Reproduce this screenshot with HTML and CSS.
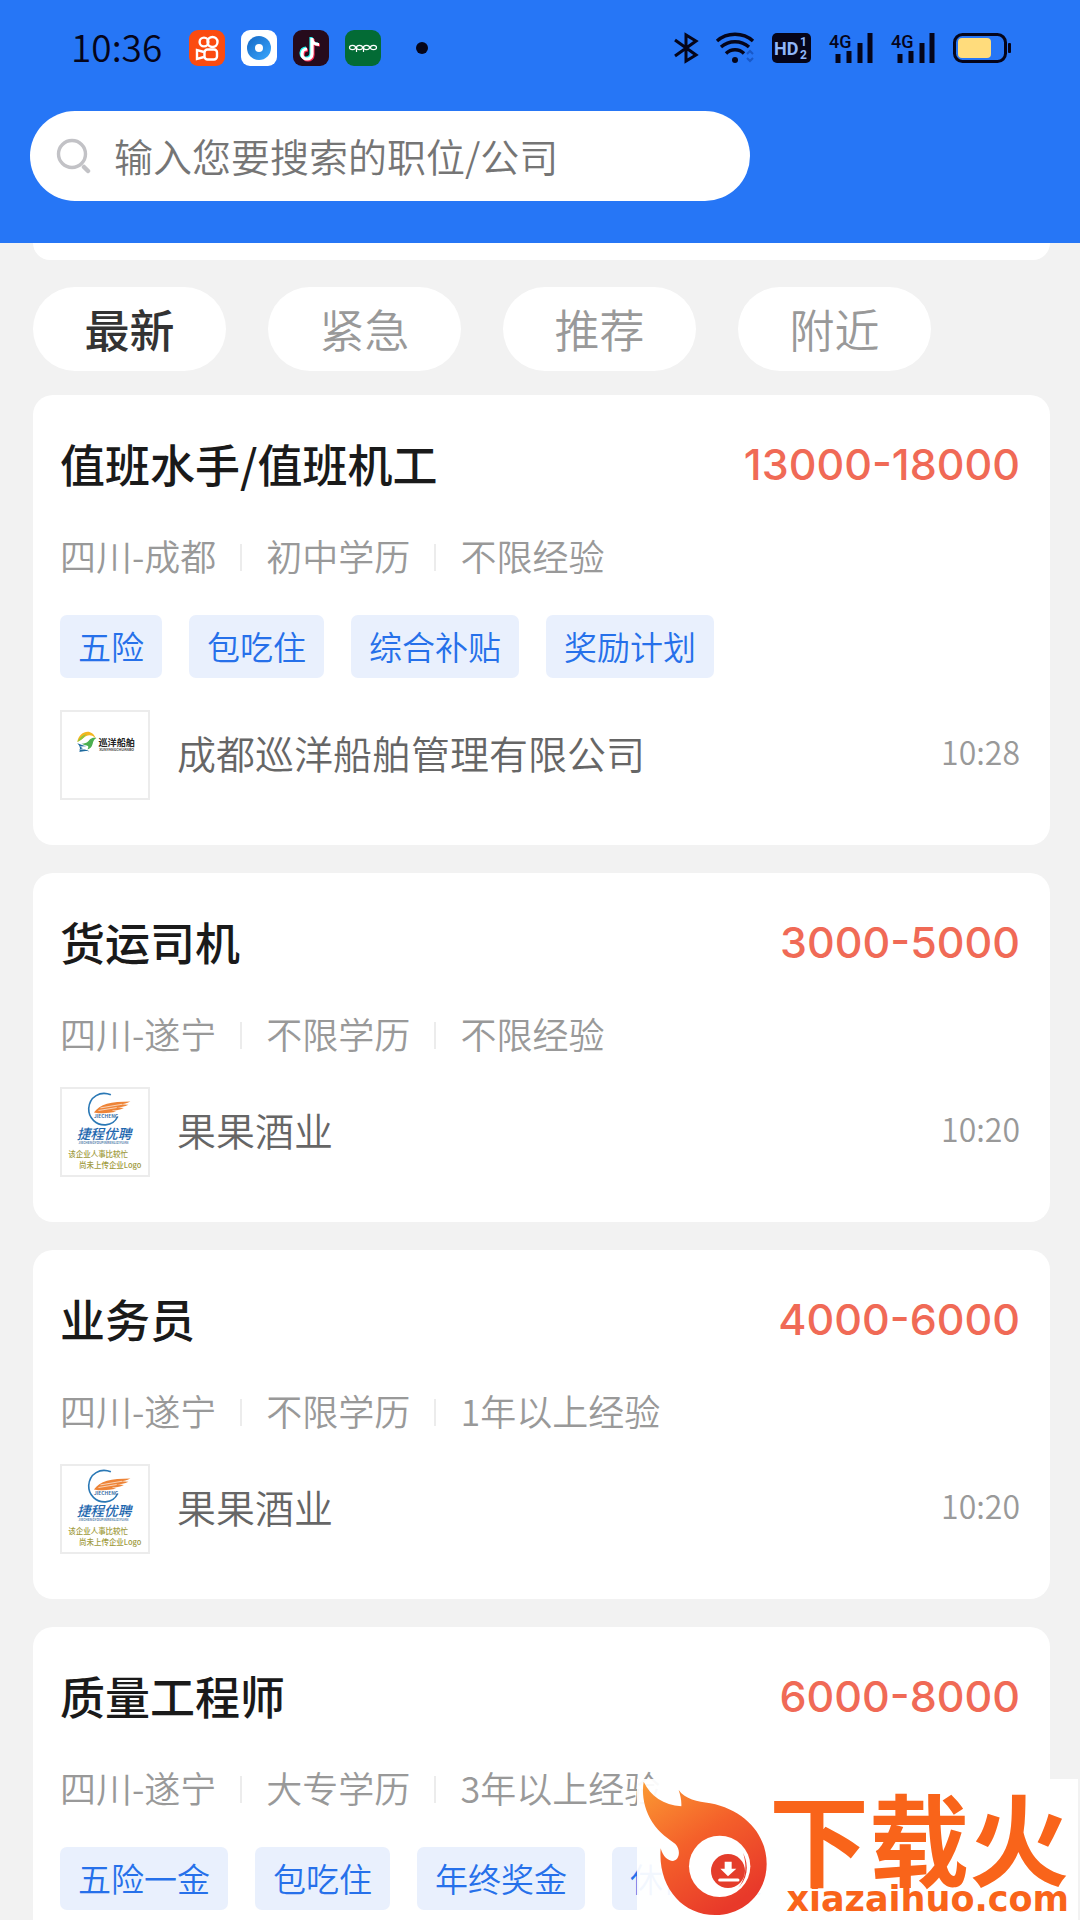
FILE: index.html
```html
<!DOCTYPE html>
<html lang="zh-CN">
<head>
    <meta charset="UTF-8">
    <meta name="viewport" content="width=device-width, initial-scale=1.0">
    <title>职位列表</title>
    <link rel="stylesheet" href="styles.css">
</head>
<body>
    <header class="top">
        <div class="status">
            <span class="clock">10:36</span>
            <div class="apps">
                <svg width="36" height="36" viewBox="0 0 36 36">
                    <rect width="36" height="36" rx="9" fill="#fb4b10"/>
                    <g fill="none" stroke="#fff" stroke-width="2.4">
                        <circle cx="15" cy="12" r="4.4"/>
                        <circle cx="23.5" cy="12" r="5"/>
                        <rect x="15.500" y="19.500" width="12.500" height="10" rx="3"/>
                        <path d="M15 22L8 20V29L15 27"/>
                    </g>
                </svg>
                <svg width="36" height="36" viewBox="0 0 36 36">
                    <defs>
                        <linearGradient id="blueRing" x1="0" y1="0" x2="1" y2="1">
                            <stop offset="0" stop-color="#1467c4"/>
                            <stop offset="1" stop-color="#3aa9ff"/>
                        </linearGradient>
                    </defs>
                    <rect width="36" height="36" rx="9" fill="#fff"/>
                    <circle cx="18" cy="18" r="12" fill="url(#blueRing)"/>
                    <circle cx="18" cy="18" r="4" fill="#fff"/>
                </svg>
                <svg width="36" height="36" viewBox="0 0 36 36">
                    <rect width="36" height="36" rx="9" fill="#260b1c"/>
                    <g fill="none" stroke-width="3.2">
                        <path d="M18 7V23A5 5 0 1 1 13 18M18 8C18 12 21 14 25 14" stroke="#25f4ee"/>
                        <path d="M20 9V25A5 5 0 1 1 15 20M20 10C20 13 23 15 27 15" stroke="#fe2c55"/>
                        <path d="M19 8V24A5 5 0 1 1 14 19M19 9C19 12.500 22 14.500 26 14.500" stroke="#fff"/>
                    </g>
                </svg>
                <svg width="36" height="36" viewBox="0 0 36 36">
                    <rect width="36" height="36" rx="9" fill="#036b35"/>
                    <g fill="none" stroke="#fff" stroke-width="1.2">
                        <ellipse cx="7.500" cy="17.500" rx="3" ry="2.200"/>
                        <ellipse cx="14.500" cy="17.500" rx="3" ry="2.200"/>
                        <ellipse cx="21.500" cy="17.500" rx="3" ry="2.200"/>
                        <ellipse cx="28.500" cy="17.500" rx="3" ry="2.200"/>
                        <path d="M11.500 17V22M18.500 17V22"/>
                    </g>
                </svg>
            </div>
            <span class="dot"></span>
            <div class="signals">
                <svg width="24" height="30" viewBox="0 0 24 30">
                    <path d="M1 7L22 22L12 28V2L22 8L1 23" fill="none" stroke="#05051a" stroke-width="3"/>
                </svg>
                <svg width="38" height="30" viewBox="0 0 38 30">
                    <g fill="none" stroke="#05051a" stroke-width="3.400">
                        <path d="M1 8C11 -1 27 -1 37 8"/>
                        <path d="M5 14C13 7 25 7 33 14"/>
                        <path d="M10 20.500C15 15.500 23 15.500 28 20.500"/>
                    </g>
                    <circle cx="19" cy="27" r="3" fill="#05051a"/>
                    <path d="M31 21L34 18L37 21M31 25L34 28L37 25" fill="none" stroke="#1858c8" stroke-width="2"/>
                </svg>
                <svg width="39" height="30" viewBox="0 0 39 30">
                    <rect width="39" height="30" rx="5" fill="#05051a"/>
                    <text x="2" y="22" font-family="Roboto" font-size="18" font-weight="700" fill="#8fb7fa">HD</text>
                    <text x="28" y="13" font-family="Roboto" font-size="12" font-weight="700" fill="#8fb7fa">1</text>
                    <text x="28" y="26" font-family="Roboto" font-size="12" font-weight="700" fill="#8fb7fa">2</text>
                </svg>
                <svg width="44" height="30" viewBox="0 0 44 30">
                    <text x="0" y="15" font-family="Roboto" font-size="18" font-weight="500" fill="#05051a">4G</text>
                    <path d="M9 21V30M20 18V30M31 10V30M41 0V30" stroke="#05051a" stroke-width="5"/>
                </svg>
                <svg width="44" height="30" viewBox="0 0 44 30">
                    <text x="0" y="15" font-family="Roboto" font-size="18" font-weight="500" fill="#05051a">4G</text>
                    <path d="M9 21V30M20 18V30M31 10V30M41 0V30" stroke="#05051a" stroke-width="5"/>
                </svg>
                <svg width="58" height="30" viewBox="0 0 58 30">
                    <rect x="1.500" y="1.500" width="51" height="27" rx="8" fill="none" stroke="#05051a" stroke-width="3"/>
                    <rect x="5" y="5" width="33" height="20" rx="4" fill="#ffdc7c"/>
                    <rect x="55" y="10" width="3" height="10" rx="1" fill="#05051a"/>
                </svg>
            </div>
        </div>
        <form class="search" role="search">
            <svg width="36" height="36" viewBox="0 0 36 36">
                <circle cx="16" cy="16" r="13.500" fill="none" stroke="#c2c2c6" stroke-width="3.400"/>
                <path d="M28 29L32 33" stroke="#c2c2c6" stroke-width="4.500" stroke-linecap="round"/>
            </svg>
            <input type="text" aria-label="搜索" placeholder="输入您要搜索的职位/公司">
        </form>
    </header>

    <main class="content">
        <div class="banner-end"></div>

        <nav class="tabs">
            <button type="button" class="tab active">最新</button>
            <button type="button" class="tab">紧急</button>
            <button type="button" class="tab">推荐</button>
            <button type="button" class="tab">附近</button>
        </nav>

        <section class="jobs">
            <article class="job">
                <div class="job-head">
                    <h2>值班水手/值班机工</h2>
                    <span class="salary">13000-18000</span>
                </div>
                <div class="meta"><span>四川-成都</span><span>初中学历</span><span>不限经验</span></div>
                <div class="tags"><span>五险</span><span>包吃住</span><span>综合补贴</span><span>奖励计划</span></div>
                <div class="company">
                    <svg class="logo" viewBox="0 0 264 264">
                        <path d="M47 92C50 70 70 57 86 62C96 65 101 73 104 82C96 72 84 69 75 74C66 78 61 86 47 92Z" fill="#f3b61f"/>
                        <path d="M47 92C54 78 64 70 76 68C68 74 65 84 47 92Z" fill="#8cc63f"/>
                        <path d="M60 97C72 98 80 93 86 84C92 78 99 78 106 80C98 84 96 90 94 98C91 108 86 113 78 115C82 108 82 104 76 103C70 102 64 101 60 97Z" fill="#4caf50"/>
                        <path d="M47 96C56 99 62 103 74 105L55 106L64 111L52 116C64 114 76 114 84 121C70 117 60 122 53 122C58 112 54 103 47 96Z" fill="#1e6a9e"/>
                        <text x="112" y="105" font-size="28" font-weight="700" fill="#222">巡洋船舶</text>
                        <text x="114" y="121" font-size="11" font-weight="700" fill="#444">XUNYANGCHUANBO</text>
                    </svg>
                    <span class="name">成都巡洋船舶管理有限公司</span>
                    <time>10:28</time>
                </div>
            </article>

            <article class="job">
                <div class="job-head">
                    <h2>货运司机</h2>
                    <span class="salary">3000-5000</span>
                </div>
                <div class="meta"><span>四川-遂宁</span><span>不限学历</span><span>不限经验</span></div>
                <div class="company">
                    <svg class="logo" viewBox="0 0 264 264">
                        <path d="M150 18C118 4 84 24 82 60C81 90 106 112 134 110C152 108 164 100 170 86" fill="none" stroke="#2a78b5" stroke-width="5"/>
                        <path d="M98 72C116 46 150 38 210 38C198 44 190 46 180 47L204 48C192 54 180 56 168 56L190 58C178 64 166 66 152 66L166 70Q130 78 98 72Z" fill="#ee8437"/>
                        <path d="M118 58L184 47M112 66L168 57" stroke="#fff" stroke-width="2"/>
                        <text x="98" y="90" font-size="15" font-weight="700" fill="#3a6ea5">JIECHENG</text>
                        <text x="45" y="152" font-size="42" font-weight="500" font-style="italic" fill="#1e67ae">捷程优聘</text>
                        <text x="50" y="168" font-size="10" font-weight="700" fill="#5b83ad">JIECHENGYOUPINRENLIZIYUAN</text>
                        <text x="19" y="210" font-size="23" font-weight="500" fill="#a09a3c">该企业人事比较忙</text>
                        <text x="52" y="244" font-size="23" font-weight="500" fill="#a09a3c">尚未上传企业Logo</text>
                    </svg>
                    <span class="name">果果酒业</span>
                    <time>10:20</time>
                </div>
            </article>

            <article class="job">
                <div class="job-head">
                    <h2>业务员</h2>
                    <span class="salary">4000-6000</span>
                </div>
                <div class="meta"><span>四川-遂宁</span><span>不限学历</span><span>1年以上经验</span></div>
                <div class="company">
                    <svg class="logo" viewBox="0 0 264 264">
                        <path d="M150 18C118 4 84 24 82 60C81 90 106 112 134 110C152 108 164 100 170 86" fill="none" stroke="#2a78b5" stroke-width="5"/>
                        <path d="M98 72C116 46 150 38 210 38C198 44 190 46 180 47L204 48C192 54 180 56 168 56L190 58C178 64 166 66 152 66L166 70Q130 78 98 72Z" fill="#ee8437"/>
                        <path d="M118 58L184 47M112 66L168 57" stroke="#fff" stroke-width="2"/>
                        <text x="98" y="90" font-size="15" font-weight="700" fill="#3a6ea5">JIECHENG</text>
                        <text x="45" y="152" font-size="42" font-weight="500" font-style="italic" fill="#1e67ae">捷程优聘</text>
                        <text x="50" y="168" font-size="10" font-weight="700" fill="#5b83ad">JIECHENGYOUPINRENLIZIYUAN</text>
                        <text x="19" y="210" font-size="23" font-weight="500" fill="#a09a3c">该企业人事比较忙</text>
                        <text x="52" y="244" font-size="23" font-weight="500" fill="#a09a3c">尚未上传企业Logo</text>
                    </svg>
                    <span class="name">果果酒业</span>
                    <time>10:20</time>
                </div>
            </article>

            <article class="job">
                <div class="job-head">
                    <h2>质量工程师</h2>
                    <span class="salary">6000-8000</span>
                </div>
                <div class="meta"><span>四川-遂宁</span><span>大专学历</span><span>3年以上经验</span></div>
                <div class="tags"><span>五险一金</span><span>包吃住</span><span>年终奖金</span><span>休假制度</span></div>
            </article>
        </section>
    </main>

    <aside class="watermark">
        <svg width="130" height="137" viewBox="110 57 390 411">
            <defs>
                <linearGradient id="flame" x1="0" y1="0" x2="0.600" y2="1">
                    <stop offset="0" stop-color="#fb9a33"/>
                    <stop offset="0.500" stop-color="#f4602a"/>
                    <stop offset="1" stop-color="#e8392a"/>
                </linearGradient>
            </defs>
            <path d="M130 65C150 108 190 135 243 139C244 122 240 105 235 90C255 118 290 124 330 130C432 150 499 222 499 312C499 400 430 465 345 465C245 465 172 380 181 265C188 290 203 303 218 303C238 300 242 270 225 252C205 236 178 222 156 187C130 145 124 102 130 65Z" fill="url(#flame)"/>
            <circle cx="358" cy="319" r="92" fill="#fff"/>
            <path d="M428 278C448 318 442 360 408 388C432 368 444 325 428 278Z" fill="#e8392a"/>
            <circle cx="383" cy="333" r="51" fill="#e43d2b"/>
            <path d="M373 305H394V326H408L383 349L360 326H373Z" fill="#fff"/>
            <path d="M358 360H413" stroke="#fff" stroke-width="9" stroke-linecap="round"/>
        </svg>
        <div class="brand">
            <strong>下载火</strong>
            <span>xiazaihuo.com</span>
        </div>
    </aside>
</body>
</html>
```
FILE: styles.css
```css
* {
    box-sizing: border-box;
}
body {
    margin: 0;
    height: 100vh;
    display: flex;
    flex-direction: column;
    position: relative;
    overflow: hidden;
    background: #f2f2f2;
    font-family: "Noto Sans CJK SC", sans-serif;
    font-weight: 350;
    color: #1a1a1a;
}
svg {
    display: block;
    flex-shrink: 0;
}

/* header */
.top {
    background: #2676f6;
    padding: 30px 30px 42px;
}
.status {
    display: flex;
    align-items: center;
    height: 36px;
    margin-bottom: 45px;
    padding: 0 39px 0 41px;
    color: #05051a;
}
.signals svg {
    overflow: visible;
}
.clock {
    width: 118px;
    padding-bottom: 4px;
    font-size: 37px;
    line-height: 36px;
}
.apps {
    display: flex;
    gap: 16px;
}
.dot {
    width: 12px;
    height: 12px;
    margin-left: 35px;
    border-radius: 50%;
    background: #05051a;
}
.signals {
    display: flex;
    gap: 18px;
    margin-left: auto;
}
.search {
    display: flex;
    align-items: center;
    gap: 22px;
    max-width: 720px;
    height: 90px;
    padding: 0 26px;
    border-radius: 45px;
    background: #fff;
}
.search input {
    flex: 1;
    min-width: 0;
    padding: 0 0 3px;
    border: none;
    outline: none;
    background: none;
    font: inherit;
    font-size: 39px;
    line-height: 60px;
    color: #333;
}
.search input::placeholder {
    color: #757575;
    opacity: 1;
}

/* list */
.content {
    flex: 1;
    min-height: 0;
    overflow: hidden;
    padding: 0 30px 0 33px;
}
.banner-end {
    height: 17px;
    background: #fff;
    border-radius: 0 0 20px 20px;
}
.tabs {
    display: flex;
    gap: 42px;
    margin: 27px 0 24px;
}
.tab {
    width: 193px;
    height: 84px;
    padding: 0 0 2px;
    border: none;
    border-radius: 42px;
    background: #fff;
    font: inherit;
    font-size: 45px;
    color: #999;
    cursor: pointer;
}
.tab.active {
    font-weight: 500;
    color: #333;
}
.jobs {
    display: flex;
    flex-direction: column;
    gap: 28px;
}
.job {
    padding: 36px 30px 45px 27px;
    border-radius: 20px;
    background: #fff;
}
.job-head {
    display: flex;
    justify-content: space-between;
    align-items: center;
    line-height: 66px;
}
.job-head h2 {
    margin: 0;
    font-size: 45px;
    font-weight: 500;
}
.salary {
    font-family: Inter, sans-serif;
    font-size: 43px;
    font-weight: 500;
    color: #f06a56;
}
.meta {
    display: flex;
    align-items: center;
    margin-top: 31px;
    font-size: 36px;
    line-height: 54px;
    color: #999;
}
.meta span + span::before {
    content: "";
    display: inline-block;
    width: 2px;
    height: 27px;
    margin: 0 24px;
    background: #ececec;
}
.tags {
    display: flex;
    gap: 27px;
    margin: 33px 0 32px;
}
.tags span {
    padding: 0 18px;
    border-radius: 7px;
    background: #e9f0fd;
    font-size: 33px;
    line-height: 63px;
    white-space: nowrap;
    color: #2670ea;
}
.company {
    display: flex;
    align-items: center;
    gap: 27px;
    margin-top: 27px;
}
.logo {
    width: 90px;
    height: 90px;
    border: 2px solid #ececec;
}
.name {
    flex: 1;
    padding-bottom: 6px;
    font-size: 39px;
    line-height: 60px;
    color: #666;
}
.company time {
    padding-bottom: 8px;
    font-size: 32px;
    line-height: 48px;
    color: #999;
}

/* site mark over the list */
.watermark {
    position: absolute;
    right: 2px;
    bottom: 0;
    display: flex;
    align-items: flex-start;
    justify-content: space-between;
    width: 441px;
    height: 141px;
    padding-right: 9px;
    background: rgba(255, 255, 255, 0.94);
    color: #f9641a;
}
.brand {
    display: flex;
    flex-direction: column;
    align-items: flex-end;
    padding-top: 7px;
}
.brand strong {
    font-size: 100px;
    line-height: 100px;
    font-weight: 700;
}
.brand span {
    font-family: "DejaVu Sans", sans-serif;
    font-size: 35px;
    line-height: 26px;
    font-weight: 700;
}
```
